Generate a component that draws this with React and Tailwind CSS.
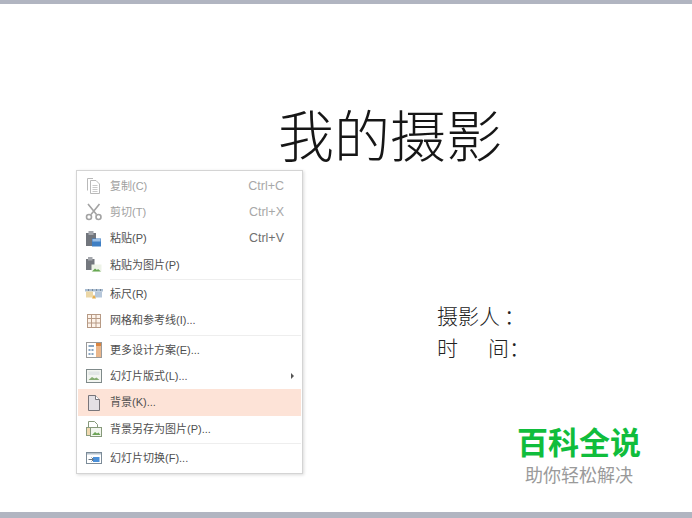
const cjk = "font-['Liberation_Sans','Noto_Sans_CJK_SC',sans-serif]";

const IconCopy = () => (
  <svg width="18" height="18" viewBox="0 0 18 18" fill="none" stroke="#b9b9b9">
    <path d="M2.5 13.5V1.5H8" />
    <path d="M5.5 3.5h5.500l3.500 3.500v9.500h-9z" fill="#fff" />
    <path d="M7.500 8.500h5M7.500 10.500h5M7.500 12.500h5M7.500 14.500h5" stroke="#c9c9c9" />
  </svg>
);

const IconCut = () => (
  <svg width="18" height="18" viewBox="0 0 18 18" fill="none" stroke="#a3a3a3" strokeWidth="1.6">
    <path d="M3 1l8.500 10.500M14.500 1L6 11.500" />
    <circle cx="4" cy="14" r="2.500" />
    <circle cx="13.500" cy="14" r="2.500" />
  </svg>
);

const IconPaste = () => (
  <svg width="18" height="18" viewBox="0 0 18 18">
    <rect x="1" y="3" width="10" height="13" fill="#71757c" />
    <rect x="3.500" y="1" width="5" height="4" fill="#a3a6ac" />
    <rect x="7" y="8.500" width="9" height="8" fill="#3f7fc4" />
    <rect x="7.500" y="9" width="8" height="2.500" fill="#9cc0e6" />
  </svg>
);

const IconPasteImage = () => (
  <svg width="18" height="18" viewBox="0 0 18 18">
    <rect x="1" y="3" width="8.500" height="11" fill="#74787e" />
    <rect x="3" y="1" width="4.500" height="3.500" fill="#a5a8ad" />
    <rect x="6.500" y="8.500" width="10" height="7" fill="#eef3e8" />
    <path d="M7 15.500l3-3 2 1.500 1-1 3 2.500z" fill="#67a852" />
  </svg>
);

const IconRuler = () => (
  <svg width="20" height="18" viewBox="0 0 20 18">
    <rect x="1" y="4" width="18" height="2.500" fill="#a9bdd2" />
    <rect x="2" y="6.500" width="7" height="6" fill="#ecd7a6" />
    <rect x="11" y="6.500" width="7" height="6" fill="#b6c7da" />
    <path d="M4 4h1v2H4zM8 4h1v2H8zM12 4h1v2h-1zM16 4h1v2h-1z" fill="#7b8a9c" />
    <path d="M8 13.500l2-4 2 4z" fill="#e5ac48" />
  </svg>
);

const IconGrid = () => (
  <svg width="18" height="18" viewBox="0 0 18 18" fill="#fdf3ea" stroke="#b79a85">
    <rect x="2.500" y="2.500" width="13" height="13" />
    <path d="M2.500 6.500h13M2.500 11h13M6.500 2.500v13M11 2.500v13" fill="none" />
  </svg>
);

const IconDesign = () => (
  <svg width="18" height="18" viewBox="0 0 18 18">
    <rect x="1.500" y="1.500" width="15" height="15" fill="#fff" stroke="#9a9a9a" />
    <rect x="11" y="2" width="5" height="14" fill="#eab78c" />
    <rect x="11" y="2" width="5" height="3" fill="#d9843f" />
    <path d="M3.500 4h5.500v2H3.500zM3.500 8h2v2h-2zM6.500 8h2v2h-2zM3.500 12h2v2h-2zM6.500 12h2v2h-2z" fill="#8aa5c0" />
  </svg>
);

const IconLayout = () => (
  <svg width="18" height="18" viewBox="0 0 18 18">
    <rect x="1.500" y="2.500" width="15" height="13" fill="#f3f5f1" stroke="#7f8a8a" />
    <path d="M3.500 13l3.500-3 2.500 1.500 2-1 3 2.500z" fill="#86ad72" />
    <rect x="3.500" y="4.500" width="11" height="3.500" fill="#e2e6e6" />
  </svg>
);

const IconPage = () => (
  <svg width="18" height="18" viewBox="0 0 18 18" fill="#e4e0e4" stroke="#78757a">
    <path d="M3.500 1.500h7l4 4v11h-11z" />
    <path d="M10.500 1.500v4h4" fill="#fff" />
  </svg>
);

const IconSaveImage = () => (
  <svg width="18" height="18" viewBox="0 0 18 18">
    <path d="M3.500 1.500h6l3 3v5h-9z" fill="#fff" stroke="#86997a" />
    <rect x="1.500" y="7.500" width="4" height="8" fill="#f0d9b0" stroke="#8b9c7f" />
    <rect x="5.500" y="7.500" width="11" height="9" fill="#f2f6ee" stroke="#86997a" />
    <path d="M7 15l3-3 2 1.500 1.500-1 2 2.500z" fill="#6da458" />
  </svg>
);

const IconTransition = () => (
  <svg width="18" height="18" viewBox="0 0 18 18">
    <rect x="1.500" y="3.500" width="15" height="11" fill="#fff" stroke="#7c8b98" />
    <rect x="2" y="4" width="14" height="1.500" fill="#b5c2cd" />
    <rect x="8" y="8" width="6.500" height="5" fill="#4a8fd8" />
    <path d="M3.500 10.500h5M6.500 8.500l2 2-2 2" fill="none" stroke="#6a7680" />
  </svg>
);

const groups = [
  [
    { icon: IconCopy, label: "复制(C)", shortcut: "Ctrl+C", disabled: true },
    { icon: IconCut, label: "剪切(T)", shortcut: "Ctrl+X", disabled: true },
    { icon: IconPaste, label: "粘贴(P)", shortcut: "Ctrl+V" },
    { icon: IconPasteImage, label: "粘贴为图片(P)" },
  ],
  [
    { icon: IconRuler, label: "标尺(R)" },
    { icon: IconGrid, label: "网格和参考线(I)..." },
  ],
  [
    { icon: IconDesign, label: "更多设计方案(E)..." },
    { icon: IconLayout, label: "幻灯片版式(L)...", arrow: true },
    { icon: IconPage, label: "背景(K)...", active: true },
    { icon: IconSaveImage, label: "背景另存为图片(P)..." },
  ],
  [{ icon: IconTransition, label: "幻灯片切换(F)..." }],
];

const MenuRow = ({ item }) => {
  const Icon = item.icon;
  return (
    <div className={`flex h-[26.3px] items-center ${item.active ? "bg-[#fde3d7]" : ""}`}>
      <div className="flex w-[32px] shrink-0 justify-center">
        <Icon />
      </div>
      <span className={`text-[11px] ${item.disabled ? "text-[#a0a0a0]" : "text-[#4f4f4f]"}`}>{item.label}</span>
      {item.shortcut && (
        <span className={`ml-auto pr-[17px] text-[12.5px] ${item.disabled ? "text-[#a8a8a8]" : "text-[#707070]"}`}>
          {item.shortcut}
        </span>
      )}
      {item.arrow && <span className="ml-auto mr-[7px] h-0 w-0 border-y-[3px] border-l-[3px] border-y-transparent border-l-[#555555]" />}
    </div>
  );
};

export default function App() {
  return (
    <div className={`flex h-[518px] w-[692px] flex-col overflow-hidden bg-white ${cjk}`}>
      <div className="h-[4px] shrink-0 bg-[#b1b5c1]" />
      <div className="relative flex-1 bg-white">
        <h1 className="pl-[278px] pt-[98px] text-[56px] leading-[72px] font-light text-[#161616]">我的摄影</h1>

        <div className="absolute left-[437px] top-[297px] text-[21px] leading-[32px] font-light text-[#222222]">
          <p>
            摄影人<span className="ml-[4px]">：</span>
          </p>
          <p className="flex">
            <span className="w-[51px]">时</span>
            <span>间：</span>
          </p>
        </div>

        <div className="absolute left-[510px] top-[422px] w-[138px] text-center">
          <p className="text-[31px] leading-[36px] font-bold text-[#10bd3c]">百科全说</p>
          <p className="mt-[2px] text-[18px] leading-[24px] text-[#9a9a9a]">助你轻松解决</p>
        </div>

        <div className="absolute left-[76px] top-[166px] w-[227px] border border-[#d4d4d4] bg-white px-px py-[2px] shadow-[1px_1px_3px_rgba(0,0,0,0.15)]">
          {groups.map((group, i) => (
            <div key={i}>
              {i > 0 && <div className="my-px ml-[32px] h-px bg-[#eeeeee]" />}
              {group.map((item) => (
                <MenuRow key={item.label} item={item} />
              ))}
            </div>
          ))}
        </div>
      </div>
      <div className="h-[6px] shrink-0 bg-[#b1b5c1]" />
    </div>
  );
}
